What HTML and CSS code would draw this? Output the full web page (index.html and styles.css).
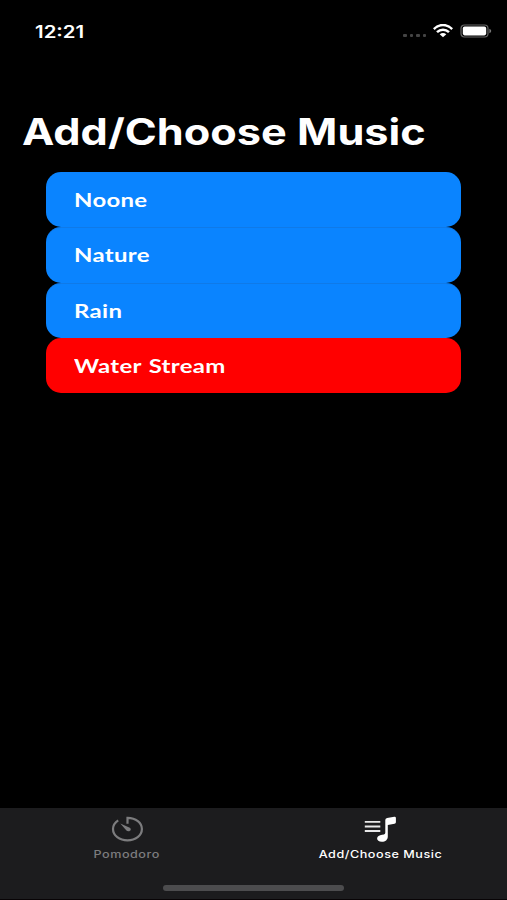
FILE: index.html
```
<!DOCTYPE html>
<html lang="en">
<head>
    <meta charset="UTF-8">
    <meta name="viewport" content="width=device-width, initial-scale=1.0">
    <title>Add/Choose Music</title>
    <link rel="stylesheet" href="styles.css">
</head>
<body>

<div class="screen">
    <header class="status-bar">
        <span class="time">12:21</span>
        <div class="status-icons">
            <div class="signal"><i></i><i></i><i></i><i></i></div>
            <svg class="wifi" width="20" height="14" viewBox="0 0 20 14" fill="none" stroke="#fff" stroke-width="2.5">
                <path d="M.8 5.1C6-.3 14-.3 19.2 5.1"/>
                <path d="M4 8.2c3.5-3.4 8.5-3.4 12 0"/>
                <path d="M6.7 10.2c2-1.7 4.6-1.7 6.6 0L10 13.2z" fill="#fff" stroke="none"/>
            </svg>
            <svg class="battery" width="32" height="14" viewBox="0 0 32 14">
                <rect x="1" y="1" width="27" height="12" rx="3.5" fill="none" stroke="#666" stroke-width="1.2"/>
                <rect x="2.8" y="2.6" width="23.4" height="8.8" rx="1.8" fill="#fff"/>
                <path d="M29.4 4.8c2.4.9 2.4 3.5 0 4.4z" fill="#777"/>
            </svg>
        </div>
    </header>

    <h1 class="title"><span>Add/Choose Music</span></h1>

    <ul class="music-list">
        <li class="music"><span>Noone</span></li>
        <li class="music"><span>Nature</span></li>
        <li class="music"><span>Rain</span></li>
        <li class="music selected"><span>Water Stream</span></li>
    </ul>

    <footer class="bottom">
        <nav class="tabs">
            <a class="tab">
                <svg width="34" height="28" viewBox="0 0 34 28" fill="none" stroke="currentColor" stroke-width="2.2">
                    <path d="M8.2 5.3C4.8 7.5 3 10.6 3 14c0 6.5 6.5 11.3 14.500 11.300S31.900 20.500 31.900 14c0-6.300-6-11-14.400-11.200v6"/>
                    <path d="M10.300 8.400l9.500 4.400c1.700 1.200 1 3.500-1.300 3.500-1 0-1.700-.4-2.300-1z" fill="currentColor" stroke="none"/>
                </svg>
                <span>Pomodoro</span>
            </a>
            <a class="tab active">
                <svg width="34" height="28" viewBox="0 0 34 28" fill="currentColor">
                    <path d="M1.800 6.900h15.500M1.800 11.500h15.500M1.800 16h15.500" stroke="currentColor" stroke-width="1.8" opacity=".9"/>
                    <path d="M22.300 5q0-1.800 1.800-2.100l7.200-1.200q1.600-.2 1.600 1.300v4.200q0 1.200-1.400 1.500l-6.700 1.200v11.600c0 3.300-2.400 5.300-6 5.300-2.900 0-4.700-1.300-4.700-3.200 0-2.300 2.200-3.500 5-3.900l1.900-.3q1.300-.3 1.300-1.600z"/>
                </svg>
                <span>Add/Choose Music</span>
            </a>
        </nav>
        <div class="home-indicator"></div>
    </footer>
</div>

</body>
</html>
```
FILE: styles.css
```
* {
    box-sizing: border-box;
}
body {
    margin: 0;
    background: #000;
    color: #fff;
    font-family: Inter, "Liberation Sans", sans-serif;
}
.screen {
    display: flex;
    flex-direction: column;
    width: 507px;
    height: 900px;
    overflow: hidden;
}

/* wide lettering: text is stretched sideways from its left edge */
.time, .title span, .music span, .tab span {
    display: inline-block;
    transform: scaleX(1.2);
    transform-origin: left center;
    white-space: nowrap;
}
.status-bar {
    display: flex;
    justify-content: space-between;
    align-items: center;
    height: 62px;
    padding: 0 15px 0 34.5px;
}
.time {
    padding-top: 1px;
    font-size: 17px;
    font-weight: 600;
}
.status-icons {
    display: flex;
    align-items: center;
}
.signal {
    display: flex;
    gap: 3px;
    margin: 8px 7px 0 0;
}
.signal i {
    width: 3.5px;
    height: 3px;
    border-radius: 1px;
    background: #444;
}
.wifi {
    margin-right: 7px;
}
.title {
    height: 110px;
    margin: 0;
    padding: 48px 0 0 22px;
    font-size: 36.5px;
    line-height: 45px;
    font-weight: 700;
}
.title span {
    transform: scaleX(1.186);
}
.music-list {
    flex: 1;
    margin: 0;
    padding: 0 46px;
    list-style: none;
}
.music {
    display: flex;
    align-items: center;
    height: 55.25px;
    padding-left: 27.5px;
    border-radius: 15px;
    background: #0a84ff;
    font-family: Lato, sans-serif;
    font-size: 19px;
    font-weight: 700;
    letter-spacing: 0.25px;
    word-spacing: 1px;
}
.music span {
    transform: scaleX(1.26);
}
.music + .music {
    box-shadow: inset 0 1px 0 rgba(30, 100, 180, 0.3);
}
.music.selected {
    background: #f00;
    box-shadow: none;
}
.bottom {
    height: 92px;
    border-bottom: 1px solid #080406;
    background: #1c1c1e;
}
.tabs {
    display: grid;
    grid-template-columns: 1fr 1fr;
    height: 77px;
    padding-top: 7px;
}
.tab {
    display: flex;
    flex-direction: column;
    align-items: center;
    color: #7c7c7e;
    font-size: 10.5px;
    line-height: 14px;
    font-weight: 500;
    letter-spacing: 0.45px;
}
.tab span {
    margin-top: 5px;
    transform-origin: center;
}
.tab.active {
    color: #fff;
}
.home-indicator {
    width: 181px;
    height: 6px;
    margin: 0 auto;
    border-radius: 3px;
    background: #4c4c4e;
}
```
